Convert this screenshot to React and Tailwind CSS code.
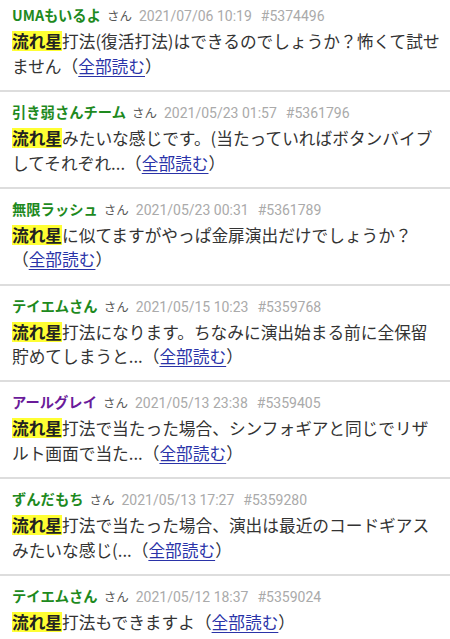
const POSTS = [
  { name: 'UMAもいるよ', color: 'green', date: '2021/07/06 10:19', id: '#5374496', text: '打法(復活打法)はできるのでしょうか？怖くて試せません' },
  { name: '引き弱さんチーム', color: 'green', date: '2021/05/23 01:57', id: '#5361796', text: 'みたいな感じです。(当たっていればボタンバイブしてそれぞれ...' },
  { name: '無限ラッシュ', color: 'green', date: '2021/05/23 00:31', id: '#5361789', text: 'に似てますがやっぱ金扉演出だけでしょうか？' },
  { name: 'テイエムさん', color: 'green', date: '2021/05/15 10:23', id: '#5359768', text: '打法になります。ちなみに演出始まる前に全保留貯めてしまうと...' },
  { name: 'アールグレイ', color: 'purple', date: '2021/05/13 23:38', id: '#5359405', text: '打法で当たった場合、シンフォギアと同じでリザルト画面で当た...' },
  { name: 'ずんだもち', color: 'green', date: '2021/05/13 17:27', id: '#5359280', text: '打法で当たった場合、演出は最近のコードギアスみたいな感じ(...' },
  { name: 'テイエムさん', color: 'green', date: '2021/05/12 18:37', id: '#5359024', text: '打法もできますよ' },
];

function Post({ p }) {
  return (
    <div className="border-t-2 border-[#dddddd] pl-[12px] pr-[10px] pt-[10px] pb-[11.8px]">
      <div className="flex items-baseline leading-[20px] whitespace-nowrap">
        <span className={p.color === 'purple' ? 'font-bold text-[14.3px] text-[#6a1b9a]' : 'font-bold text-[14.3px] text-[#1e8a1e]'}>{p.name}</span>
        <span className="ml-[6px] text-[12.5px] text-[#555]">さん</span>
        <span className="ml-[7px] text-[14px] text-[#aaaaaa] font-['Roboto','Noto_Sans_CJK_JP',sans-serif]">{p.date}</span>
        <span className="ml-[9px] text-[14px] text-[#aaaaaa] font-['Roboto','Noto_Sans_CJK_JP',sans-serif]">{p.id}</span>
      </div>
      <div className="mt-[3px] text-[16.7px] leading-[24.5px] text-[#333]">
        <span className="inline-block leading-[20px] bg-[#ffff33] font-bold text-[#222]">流れ星</span>
        {p.text}
        （<span className="text-[#2a33a8] underline underline-offset-[3px]">全部読む</span>）
      </div>
    </div>
  );
}

export default function App() {
  return (
    <div className="w-[450px] h-[639px] overflow-hidden bg-white font-['Noto_Sans_CJK_JP',sans-serif]">
      <div className="-mt-[6.8px]">
        {POSTS.map((p, i) => (
          <Post key={i} p={p} />
        ))}
      </div>
    </div>
  );
}
